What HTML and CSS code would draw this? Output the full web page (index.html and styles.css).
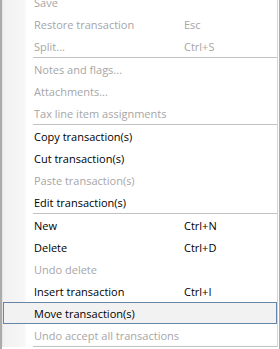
FILE: index.html
```html
<!DOCTYPE html>
<html>
<head>
  <title>Context Menu</title>
  <link rel="stylesheet" href="styles.css">
</head>
<body>
  <!-- Register context menu (scrolled, top item cut off) -->
  <div class="frame">
    <ul class="menu">
      <li class="item disabled"><span class="label">Save</span></li>
      <li class="item disabled"><span class="label">Restore transaction</span><span class="key">Esc</span></li>
      <li class="item disabled"><span class="label">Split...</span><span class="key">Ctrl+S</span></li>
      <li class="sep"></li>
      <li class="item disabled"><span class="label">Notes and flags...</span></li>
      <li class="item disabled"><span class="label">Attachments...</span></li>
      <li class="item disabled"><span class="label">Tax line item assignments</span></li>
      <li class="sep"></li>
      <li class="item"><span class="label">Copy transaction(s)</span></li>
      <li class="item"><span class="label">Cut transaction(s)</span></li>
      <li class="item disabled"><span class="label">Paste transaction(s)</span></li>
      <li class="item"><span class="label">Edit transaction(s)</span></li>
      <li class="sep"></li>
      <li class="item"><span class="label">New</span><span class="key">Ctrl+N</span></li>
      <li class="item"><span class="label">Delete</span><span class="key">Ctrl+D</span></li>
      <li class="item disabled"><span class="label">Undo delete</span></li>
      <li class="item"><span class="label">Insert transaction</span><span class="key">Ctrl+I</span></li>
      <li class="item hover"><span class="label">Move transaction(s)</span></li>
      <li class="item disabled"><span class="label">Undo accept all transactions</span></li>
      <li class="sep"></li>
    </ul>
  </div>
</body>
</html>
```

FILE: styles.css
```css
body {
  margin: 0;
  padding: 0;
  background-color: #FFFFFF;
  font-family: "Open Sans", "Noto Sans", sans-serif;
  font-size: 11px;
  color: #000000;
}

.frame {
  width: 276px;
  height: 349px;
  overflow: hidden;
  border-left: 2px solid #ABABAB;
  border-right: 1px solid #ABABAB;
  padding-right: 1px;
  background-color: #FFFFFF;
}

.menu {
  list-style: none;
  margin: -9px 0 0 0;
  padding: 0;
  border-left: 1px solid #E6E6E6;
  border-right: 1px solid #D4D4D4;
  background: linear-gradient(to right, #F1F1F1 0, #F7F7F7 22px, #FFFFFF 23px, #FFFFFF 100%);
}

.item {
  display: flex;
  align-items: center;
  height: 22px;
  box-sizing: border-box;
  border: 1px solid transparent;
  padding-left: 30px;
  white-space: nowrap;
}

.item .label {
  width: 150px;
}

.disabled {
  color: #A6A6A6;
}

.hover {
  background-color: #F2F2F2;
  border-color: #6585A6;
}

.sep {
  height: 1px;
  margin-left: 30px;
  background-color: #C3C3C3;
}
```
